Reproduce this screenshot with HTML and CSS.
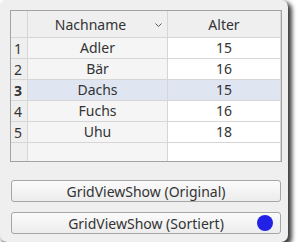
FILE: index.html
```html
<!DOCTYPE html>
<html lang="de">

<head>
    <meta charset="UTF-8">
    <title>GridViewShow</title>
    <link rel="stylesheet" href="styles.css">
</head>

<body>
    <!-- Fenster -->
    <div class="window">
        <!-- Tabelle -->
        <div class="grid">
            <div class="rowhead"></div>
            <div class="head">
                <span class="label">Nachname</span>
                <svg class="sort" width="7" height="4" viewBox="0 0 7 4">
                    <polyline points="0.5,0.5 3.5,3.5 6.5,0.5" fill="none" stroke="#555" stroke-width="1"/>
                </svg>
            </div>
            <div class="head"><span class="label">Alter</span></div>

            <div class="rowhead">1</div>
            <div class="cell name">Adler</div>
            <div class="cell">15</div>

            <div class="rowhead">2</div>
            <div class="cell name">Bär</div>
            <div class="cell">16</div>

            <div class="rowhead current">3</div>
            <div class="cell name selected">Dachs</div>
            <div class="cell selected">15</div>

            <div class="rowhead">4</div>
            <div class="cell name">Fuchs</div>
            <div class="cell">16</div>

            <div class="rowhead">5</div>
            <div class="cell name">Uhu</div>
            <div class="cell">18</div>

            <!-- leerer Bereich -->
            <div class="rowhead"></div>
            <div class="cell name"></div>
            <div class="cell"></div>
        </div>

        <!-- Buttons -->
        <button class="btn first">GridViewShow (Original)</button>
        <button class="btn">GridViewShow (Sortiert)<span class="dot"></span></button>
    </div>
</body>

</html>
```

FILE: styles.css
```css
/* Grundlayout */
body {
    margin: 0;
    background-color: white;
    font-family: "Noto Sans", sans-serif;
    font-size: 14px;
    color: #333;
}

.window {
    width: 288px;
    height: 242px;
    box-sizing: border-box;
    padding: 10px 6px 0 10px;
    background-color: #efefef;
    border-radius: 7px;
    box-shadow: 3px 3px 4px 1px rgba(0, 0, 0, 0.75);
    display: flex;
    flex-direction: column;
}

/* Tabelle */
.grid {
    height: 152px;
    box-sizing: border-box;
    border: 1px solid #a3a3a3;
    padding-right: 1px;
    background-color: #d6d6d6;
    display: grid;
    grid-template-columns: 16px 139px 112px;
    grid-template-rows: 26px repeat(5, 20px) 1fr;
    gap: 1px;
}

.head {
    background-color: #efefef;
    display: flex;
    align-items: center;
}

.head .label {
    flex: 1;
    text-align: center;
}

.sort {
    margin: 1px 5px 0 2px;
}

.rowhead {
    background-color: #efefef;
    padding-left: 3px;
    line-height: 21px;
}

.rowhead.current {
    font-weight: bold;
}

.cell {
    background-color: white;
    text-align: center;
    line-height: 20px;
}

.cell.name {
    background-color: #f5f5f5;
}

.cell.selected {
    background-color: #dfe6f2;
}

/* Buttons */
.btn {
    position: relative;
    height: 22px;
    margin: 0 1px;
    padding: 0;
    border: 1px solid #a6a6a6;
    border-radius: 3px;
    background: linear-gradient(#fbfbfb, #ececec);
    font-family: "Noto Sans", sans-serif;
    font-size: 14px;
    color: #333;
    margin-top: 10px;
}

.btn.first {
    margin-top: 18px;
}

.dot {
    position: absolute;
    right: 7px;
    top: 2px;
    width: 16px;
    height: 16px;
    border-radius: 50%;
    background-color: #2222e6;
}
```
